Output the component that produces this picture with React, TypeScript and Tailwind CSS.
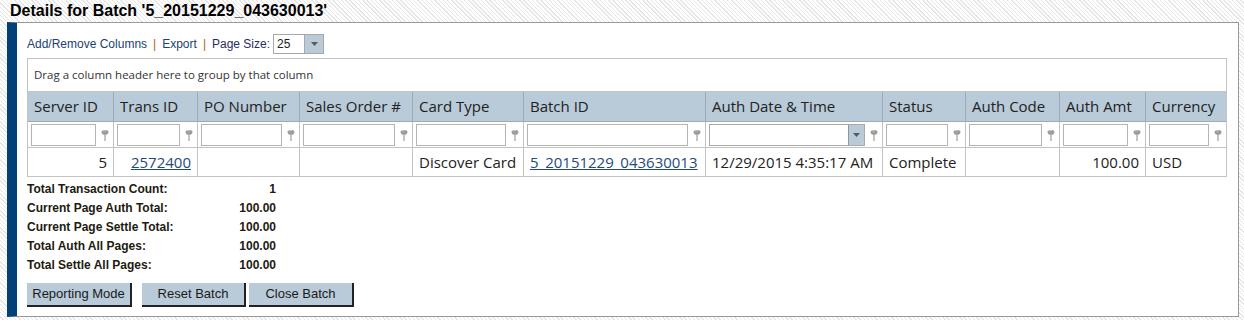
import React from 'react';

// Batch details grid page
const cols = [
  { title: 'Server ID', align: 'right' },
  { title: 'Trans ID', align: 'right' },
  { title: 'PO Number', align: 'left' },
  { title: 'Sales Order #', align: 'left' },
  { title: 'Card Type', align: 'left' },
  { title: 'Batch ID', align: 'left' },
  { title: 'Auth Date & Time', align: 'left' },
  { title: 'Status', align: 'left' },
  { title: 'Auth Code', align: 'left' },
  { title: 'Auth Amt', align: 'right' },
  { title: 'Currency', align: 'left' },
];

const row: { text: string; link?: boolean }[] = [
  { text: '5' },
  { text: '2572400', link: true },
  { text: '' },
  { text: '' },
  { text: 'Discover Card' },
  { text: '5_20151229_043630013', link: true },
  { text: '12/29/2015 4:35:17 AM' },
  { text: 'Complete' },
  { text: '' },
  { text: '100.00' },
  { text: 'USD' },
];

const totals = [
  ['Total Transaction Count:', '1'],
  ['Current Page Auth Total:', '100.00'],
  ['Current Page Settle Total:', '100.00'],
  ['Total Auth All Pages:', '100.00'],
  ['Total Settle All Pages:', '100.00'],
];

function Pin() {
  return (
    <svg width="8" height="12" viewBox="0 0 8 12">
      <path d="M0.5 3 C0.5 0.4 7.5 0.4 7.5 3 C7.5 5 5.8 5.8 4 5.8 C2.2 5.8 0.5 5 0.5 3 Z" fill="#9c9c9c" />
      <path d="M2 2.2 C2.6 1.6 4 1.5 4.8 1.9" stroke="#d6d6d6" strokeWidth="0.9" fill="none" />
      <rect x="3.4" y="5.5" width="1.2" height="6.5" fill="#a0a0a0" />
    </svg>
  );
}

function Arrow() {
  return (
    <svg width="7" height="4" viewBox="0 0 7 4">
      <path d="M0 0 H7 L3.5 4 Z" fill="#5a5a5a" />
    </svg>
  );
}

export default function App() {
  return (
    <div className="min-h-[320px] w-[1244px] bg-[image:repeating-linear-gradient(45deg,#ffffff_0px,#ffffff_2px,#e6e6e6_2px,#e6e6e6_3px)] font-['Liberation_Sans',Arial,sans-serif]">
      {/* Titulo */}
      <div className="h-[22px] pl-[10px] pt-[2px] text-[16px] font-bold leading-[18px] text-black">
        Details for Batch '5_20151229_043630013'
      </div>

      <div className="ml-[7px] mr-[5px] h-[295px] border-l-[10px] border-t border-r border-b border-l-[#004178] border-t-[#999] border-r-[#999] border-b-[#999] bg-white pl-[10px] pr-[11px] pt-[11px]">
        {/* Toolbar */}
        <div className="flex h-[20px] items-center text-[12px] text-[#213f72]">
          <span>Add/Remove Columns</span>
          <span className="mx-[6px] text-[#c0600a]">|</span>
          <span>Export</span>
          <span className="mx-[6px] text-[#c0600a]">|</span>
          <span className="text-[#2b2d5e]">Page Size:</span>
          <div className="ml-[3px] flex h-[20px] w-[51px] border border-[#a8a8a8]">
            <div className="flex-1 bg-white pl-[3px] text-[12px] leading-[18px] text-[#222]">25</div>
            <div className="flex w-[19px] items-center justify-center border-l border-[#a8a8a8] bg-[#b9cad9]">
              <Arrow />
            </div>
          </div>
        </div>

        {/* Grid */}
        <div className="mt-[4px] border border-[#c3c3c3] font-['Open_Sans',sans-serif] text-[15px] text-[#222]">
          <div className="flex h-[33px] items-center border-b border-[#c3c3c3] pl-[6px] text-[11.5px] text-[#333]">
            Drag a column header here to group by that column
          </div>
          <div className="grid grid-cols-[86px_84px_102px_113px_111px_182px_177px_83px_94px_86px_80px]">
            {cols.map((c, i) => (
              <div
                key={c.title}
                className={`flex h-[30px] items-center whitespace-nowrap border-b border-[#a0aab4] bg-[#b9cad9] pl-[6px] ${i < cols.length - 1 ? 'border-r border-r-[#a0aab4]' : ''}`}
              >
                {c.title}
              </div>
            ))}
            {cols.map((c, i) => (
              <div
                key={c.title + '-f'}
                className={`flex h-[26px] items-center border-b border-[#c3c3c3] pl-[3px] ${i < cols.length - 1 ? 'border-r' : ''}`}
              >
                {i === 6 ? (
                  <div className="flex h-[22px] flex-1 border border-[#aaa] bg-white">
                    <div className="flex-1" />
                    <div className="flex w-[16px] items-center justify-center border-l border-[#8a98a6] bg-[#b9cad9]">
                      <Arrow />
                    </div>
                  </div>
                ) : (
                  <div className="h-[22px] flex-1 border border-[#b4b4b4] bg-white" />
                )}
                <div className="flex w-[17px] items-center justify-center">
                  <Pin />
                </div>
              </div>
            ))}
            {row.map((d, i) => (
              <div
                key={'d' + i}
                className={`flex h-[28px] items-center whitespace-nowrap px-[6px] ${cols[i].align === 'right' ? 'justify-end' : ''} ${i < cols.length - 1 ? 'border-r border-[#c3c3c3]' : ''}`}
              >
                {d.link ? <span className="text-[#1f4a7c] underline">{d.text}</span> : d.text}
              </div>
            ))}
          </div>
        </div>

        {/* Totais */}
        <div className="mt-[2px] w-[249px] text-[12px] font-bold text-[#221a10]">
          {totals.map(([label, value]) => (
            <div key={label} className="flex h-[19px] items-center justify-between">
              <span>{label}</span>
              <span>{value}</span>
            </div>
          ))}
        </div>

        {/* Botões */}
        <div className="mt-[9px] flex text-[13px] text-[#1a1a1a]">
          <button className="h-[24px] w-[105px] border-r-2 border-b-2 border-r-[#222] border-b-[#222] bg-[#b9cad9]">Reporting Mode</button>
          <button className="ml-[10px] h-[24px] w-[104px] border-r-2 border-b-2 border-r-[#222] border-b-[#222] bg-[#b9cad9]">Reset Batch</button>
          <button className="ml-[3px] h-[24px] w-[105px] border-r-2 border-b-2 border-r-[#222] border-b-[#222] bg-[#b9cad9]">Close Batch</button>
        </div>
      </div>
    </div>
  );
}
